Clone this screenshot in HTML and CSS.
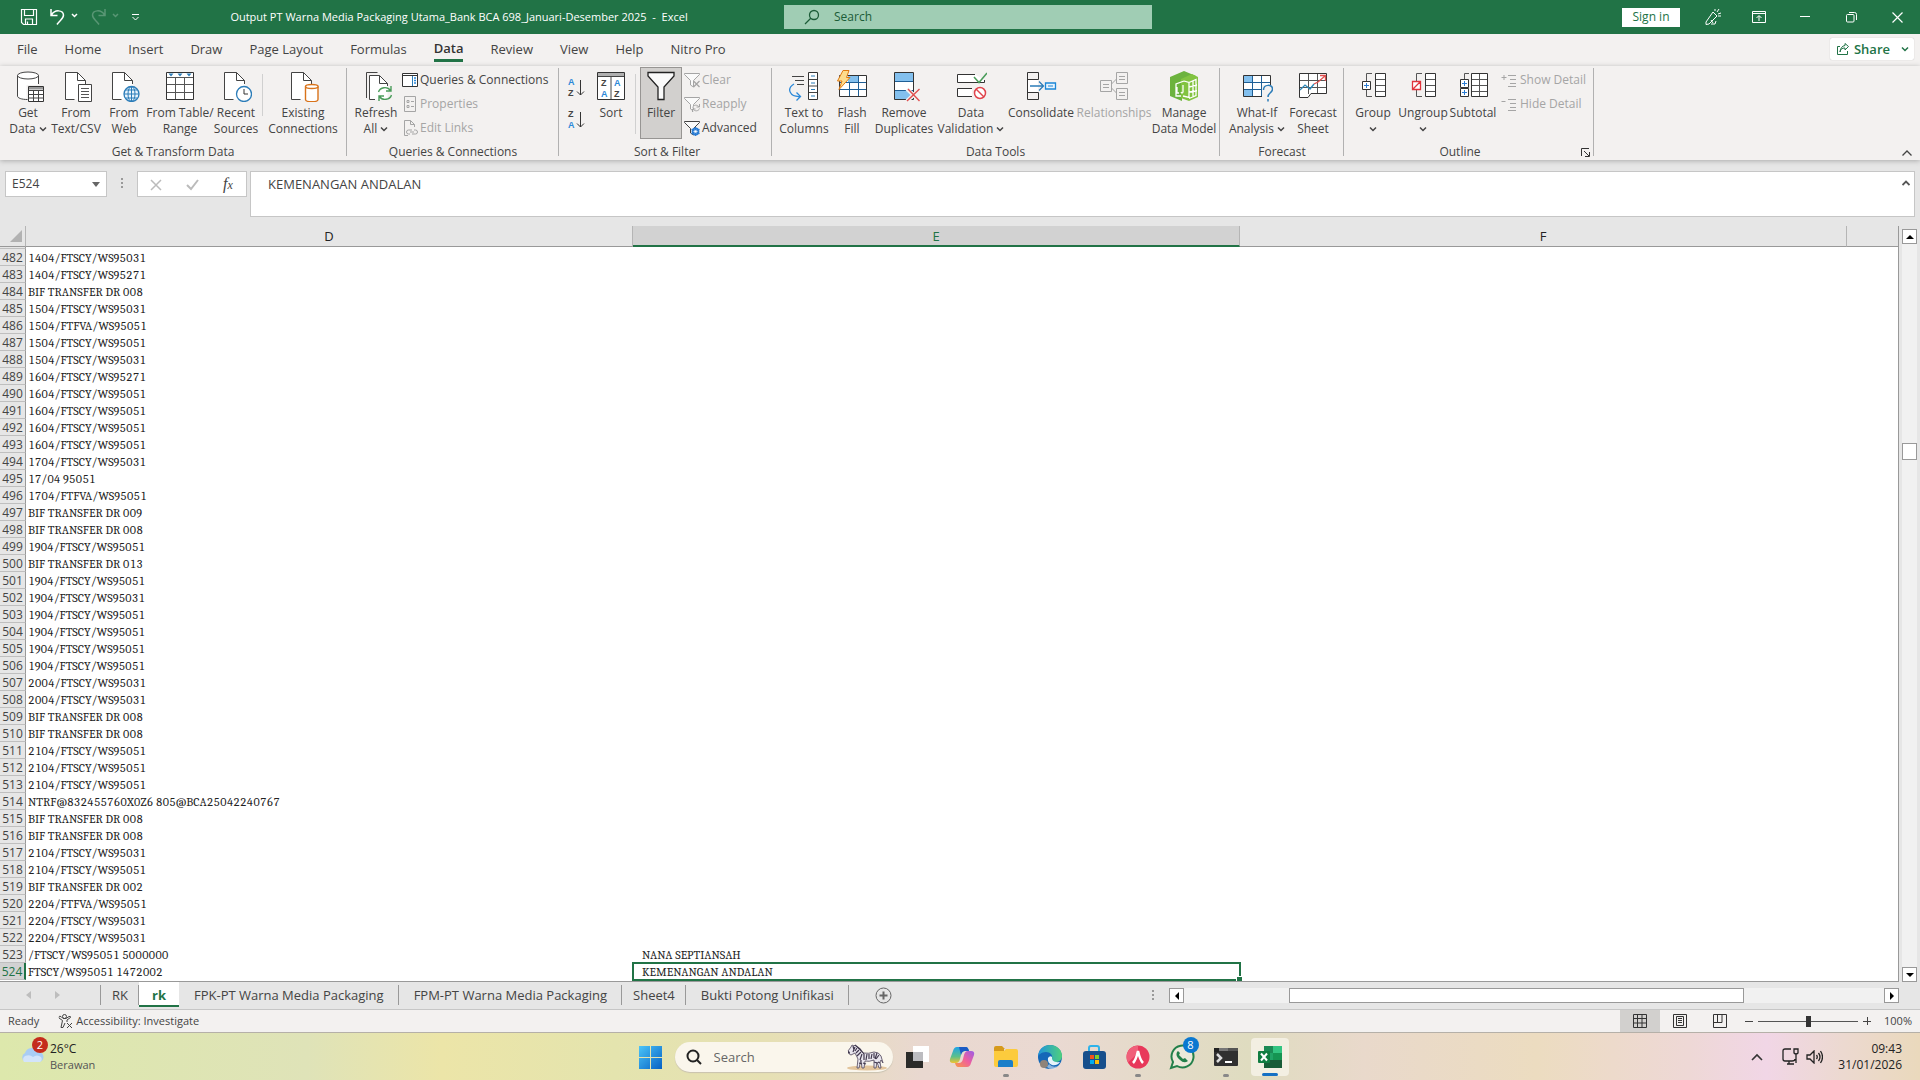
FILE: index.html
```html
<!DOCTYPE html>
<html lang="en">
<head>
    <meta charset="UTF-8">
    <meta name="viewport" content="width=device-width, initial-scale=1.0">
    <title>Output PT Warna Media Packaging Utama_Bank BCA 698_Januari-Desember 2025 - Excel</title>
    <link rel="stylesheet" href="styles.css">
</head>
<body>

    <!-- shared symbols -->
    <svg class="sprite" aria-hidden="true">
        <symbol id="chevron" viewBox="0 0 8 6"><path d="M1 1.500l3 3 3-3" fill="none" stroke="currentColor" stroke-width="1.500"/></symbol>
        <symbol id="page" viewBox="0 0 32 32"><path d="M4.500 2.500h12l8 8v19h-20z" fill="#fff"/><path d="M24.500 14v-3.500l-8-8h-12v27h9M16.500 2.500v8h8" fill="none" stroke="#444"/></symbol>
        <symbol id="funnel" viewBox="0 0 16 16"><path d="M.5 1.500h15v1l-6 6v6.500l-3-2v-4.500l-6-6z" fill="#fafafa" stroke="currentColor"/></symbol>
    </svg>

    <header class="titlebar">
        <div class="quick-access">
            <button aria-label="Save"><svg width="18" height="18" viewBox="0 0 18 18" fill="none" stroke="#fff" stroke-width="1.200"><path d="M1.500 1.500h15v15h-13l-2-2zM4.500 1.500v6h9v-6M5.500 16v-5h7v5M7.500 13.500v3"/></svg></button>
            <button aria-label="Undo"><svg width="30" height="18" viewBox="0 0 30 18" fill="none" stroke="#fff" stroke-width="1.500"><path d="M2 1v6.500h6.500M2.500 7C6 1 14 2 14.500 7c0 4-4 5.500-6.500 9.500"/><path d="M23 6l2.500 2.500L28 6"/></svg></button>
            <button class="faded" aria-label="Redo"><svg width="30" height="18" viewBox="0 0 30 18" fill="none" stroke="#fff" stroke-width="1.500"><path d="M15 1v6.500H8.500M14.500 7C11 1 3 2 2.500 7c0 4 4 5.500 6.500 9.500"/><path d="M23 6l2.500 2.500L28 6"/></svg></button>
            <button aria-label="Customize"><svg width="9" height="9" viewBox="0 0 9 9" fill="none" stroke="#fff"><path d="M1 1.500h7M1.500 4l3 3 3-3"/></svg></button>
        </div>
        <h1>Output PT Warna Media Packaging Utama_Bank BCA 698_Januari-Desember 2025 &nbsp;- &nbsp;Excel</h1>
        <label class="title-search">
            <svg width="16" height="16" viewBox="0 0 16 16" fill="none" stroke="#1c5c38" stroke-width="1.300"><circle cx="10" cy="6" r="4.500"/><path d="M7 9l-6 6"/></svg>
            <input type="text" placeholder="Search" aria-label="Search">
        </label>
        <div class="window-tools">
            <button class="sign-in">Sign in</button>
            <button class="win" aria-label="Coming soon"><svg width="18" height="18" viewBox="0 0 18 18" fill="none" stroke="#fff"><path d="M2 14l7-10 4 4-8 8-3 .5zM9 15l-2-3M7 16h4l1-3M11 3l0-2M13 4l2-3M14 6l3-1M14 8h3"/></svg></button>
            <button class="win" aria-label="Ribbon display"><svg width="14" height="12" viewBox="0 0 14 12" fill="none" stroke="#fff"><path d="M.5.500h13v11H.5zM.5 2.500h13M7 10V5M4.500 7L7 4.500 9.500 7"/></svg></button>
            <button class="win" aria-label="Minimize"><svg width="10" height="10" viewBox="0 0 10 10" fill="none" stroke="#fff"><path d="M0 4.500h10"/></svg></button>
            <button class="win" aria-label="Restore"><svg width="11" height="11" viewBox="0 0 11 11" fill="none" stroke="#fff"><rect x=".5" y="2.500" width="7.500" height="7.500" rx="1"/><path d="M3 .5h5.500q2 0 2 2V8"/></svg></button>
            <button class="win" aria-label="Close"><svg width="11" height="11" viewBox="0 0 11 11" fill="none" stroke="#fff" stroke-width="1.200"><path d="M.5.500l10 10M10.500.500l-10 10"/></svg></button>
        </div>
    </header>

    <nav class="tabs">
        <button>File</button>
        <button>Home</button>
        <button>Insert</button>
        <button>Draw</button>
        <button>Page Layout</button>
        <button>Formulas</button>
        <button class="active">Data</button>
        <button>Review</button>
        <button>View</button>
        <button>Help</button>
        <button>Nitro Pro</button>
        <button class="share">
            <svg width="12" height="12" viewBox="0 0 12 12" fill="none" stroke="#217346"><path d="M3 3.500H.5v8h10V8M3 9c.5-3 2-4 5-4v2l3.500-3.500L8 .5v2C5 3 3.500 5 3 9z"/></svg>
            Share
            <svg class="chev" width="8" height="6"><use href="#chevron"/></svg>
        </button>
    </nav>

    <section class="ribbon">
        <div class="group g-get">
            <div class="tools">
                <button class="tool w48"><svg class="icon" viewBox="-3 0 32 32"><path d="M2.500 5v21c0 2 4 3.500 9 3.500V15h12V5" fill="#fff"/><ellipse cx="13" cy="5.500" rx="10.500" ry="3.500" fill="#fff" stroke="#444"/><path d="M2.500 5.500V26c0 2 4 3.500 10 3.500M23.500 5.500V14" fill="none" stroke="#444"/><path d="M13.500 16.500h15v15h-15z" fill="#fff" stroke="#333"/><path d="M14 17h14v2.500H14z" fill="#999"/><path d="M13.500 20.500h15M13.500 24.500h15M13.500 28h15M18.500 20v11M23.500 20v11" fill="none" stroke="#444"/></svg><span>Get<br>Data <svg class="chev" width="8" height="6"><use href="#chevron"/></svg></span></button>
                <button class="tool w48"><svg class="icon" viewBox="-1 0 32 32"><use href="#page" width="32" height="32"/><path d="M17.500 14.500h13v17h-13z" fill="#fff" stroke="#444"/><path d="M20 18.500h8M20 21.500h8M20 24.500h8M20 27.500h8" stroke="#555"/></svg><span>From<br>Text/CSV</span></button>
                <button class="tool w48"><svg class="icon" viewBox="0 0 32 32"><use href="#page"/><circle cx="23.500" cy="24" r="7.500" fill="#e8f4fd" stroke="#2b7cb8" stroke-width="1.300"/><path d="M16 24h15M23.500 16.500v15M17.500 20h12M17.500 28h12" stroke="#2b7cb8"/><ellipse cx="23.500" cy="24" rx="3.500" ry="7.500" fill="none" stroke="#2b7cb8"/></svg><span>From<br>Web</span></button>
                <button class="tool w64"><svg class="icon" viewBox="0 0 32 32"><path d="M2.500 2.500h27v27h-27z" fill="#fff" stroke="#333"/><path d="M3 7.500h26M3 14.500h26M3 22.500h26M11.500 7v22M20.500 7v22" stroke="#555"/><path d="M4.500 3.500h5L7 6.500zM13.500 3.500h5L16 6.500zM22.500 3.500h5L25 6.500z" fill="#2b7cb8"/></svg><span>From Table/<br>Range</span></button>
                <button class="tool w48"><svg class="icon" viewBox="0 0 32 32"><use href="#page"/><circle cx="24" cy="24" r="7.500" fill="#fff" stroke="#2b7cb8" stroke-width="1.300"/><path d="M24 19v5h4" fill="none" stroke="#333"/></svg><span>Recent<br>Sources</span></button>
                <i class="sep"></i>
                <button class="tool w72"><svg class="icon" viewBox="0 0 32 32"><use href="#page"/><path d="M18.500 16.500v13c0 3 12.500 3 12.500 0v-13" fill="#fff" stroke="#d9731a" stroke-width="1.400"/><ellipse cx="24.800" cy="16.500" rx="6.300" ry="2" fill="#fff" stroke="#d9731a" stroke-width="1.400"/></svg><span>Existing<br>Connections</span></button>
            </div>
            <h2>Get &amp; Transform Data</h2>
        </div>

        <div class="group g-queries">
            <div class="tools">
                <button class="tool w48"><svg class="icon" viewBox="0 0 32 32"><path d="M6.500 28V2.500h11" fill="none" stroke="#444"/><path d="M9.500 5.500h10l8 8v16h-18z" fill="#fff"/><path d="M15 29.500H9.500v-24h10l8 8V16M19.500 5.500v8h8" fill="none" stroke="#444"/><path d="M18.500 22c1.500-5 9-6 12-1.500M31 16v5h-5M31.500 25c-1.500 5-9 6-12 1.500M19 31v-5h5" fill="none" stroke="#4a9c5a" stroke-width="1.400"/></svg><span>Refresh<br>All <svg class="chev" width="8" height="6"><use href="#chevron"/></svg></span></button>
                <div class="stack">
                    <button><svg width="16" height="14" viewBox="0 0 16 14"><path d="M.5.500h15v13H.5z" fill="#fff" stroke="#333"/><path d="M1 2.500h14" stroke="#333"/><path d="M10.500 3v10" stroke="#2b7cb8"/><path d="M12 5h2M12 7.500h2M12 10h2" stroke="#2b88d8" stroke-width="1.500"/></svg>Queries &amp; Connections</button>
                    <button disabled><svg width="16" height="16" viewBox="0 0 16 16" fill="none" stroke="#a5a5a5"><path d="M2.500.500h11v15h-11zM5 4.500h2v2H5zM5 9.500h2v2H5zM9 5.500h3M9 10.500h3"/></svg>Properties</button>
                    <button disabled><svg width="16" height="16" viewBox="0 0 16 16" fill="none" stroke="#a5a5a5"><path d="M6 15.500H2.500V.5h6l4 4V7M8.500.5v4h4M8 14H6.500q-2 0-2-2t2-2H10M12 10h1.500q2 0 2 2t-2 2H10M8 12h4"/></svg>Edit Links</button>
                </div>
            </div>
            <h2>Queries &amp; Connections</h2>
        </div>

        <div class="group g-sort">
            <div class="tools">
                <div class="az">
                    <button aria-label="Sort A to Z"><svg width="18" height="22" viewBox="0 0 18 22"><text x="1" y="9" class="blue">A</text><text x="1" y="20">Z</text><path d="M13.500 4v15M10 15.500l3.500 3.500 3.500-3.500" fill="none" stroke="#333"/></svg></button>
                    <button aria-label="Sort Z to A"><svg width="18" height="22" viewBox="0 0 18 22"><text x="1" y="9">Z</text><text x="1" y="20" class="blue">A</text><path d="M13.500 4v15M10 15.500l3.500 3.500 3.500-3.500" fill="none" stroke="#333"/></svg></button>
                </div>
                <button class="tool w48"><svg class="icon az-box" viewBox="0 0 32 32"><path d="M2.500 2.500h27v27h-27z" fill="#fff" stroke="#333"/><path d="M3 3h26v3H3z" fill="#b0b0b0"/><path d="M3 6.500h26M16 6v23" stroke="#444"/><text x="6" y="16">Z</text><text x="6" y="27" class="blue">A</text><text x="19" y="16" class="blue">A</text><text x="19" y="27">Z</text></svg><span>Sort</span></button>
                <i class="sep tall"></i>
                <button class="tool w42 pressed"><svg class="icon" viewBox="0 0 32 32"><path d="M3 2.500h26v3.500L19 17v12.500h-6V17L3 6z" fill="#fafafa" stroke="#222" stroke-width="1.300"/></svg><span>Filter</span></button>
                <div class="stack">
                    <button disabled><svg width="16" height="16" viewBox="0 0 16 16"><use href="#funnel"/><path d="M9.500 9l6 6M15.500 9l-6 6" stroke="#a5a5a5" stroke-width="1.300"/></svg>Clear</button>
                    <button disabled><svg width="16" height="16" viewBox="0 0 16 16"><use href="#funnel"/><path d="M8.500 11.500c1-3 5-3 6.500-.5M15.500 8v3h-3M15.500 12.500c-1 3-5 3-6.500.5M8.500 16v-3h3" fill="#f3f1f0" stroke="#a5a5a5"/></svg>Reapply</button>
                    <button><svg width="16" height="16" viewBox="0 0 16 16"><use href="#funnel"/><circle cx="11.500" cy="11.500" r="3" fill="#fff" stroke="#2b7cd3" stroke-width="1.800"/><path d="M11.500 7v9M7.500 9.200l8 4.600M7.500 13.800l8-4.600" stroke="#2b7cd3" stroke-width="1.300"/><circle cx="11.500" cy="11.500" r="1.300" fill="#fff"/></svg>Advanced</button>
                </div>
            </div>
            <h2>Sort &amp; Filter</h2>
        </div>

        <div class="group g-data">
            <div class="tools">
                <button class="tool w56"><svg class="icon" viewBox="0 0 32 32"><path d="M4 6.500h12M7 10.500h9M9 14.500h7" stroke="#444"/><path d="M20.500 2.500h9v27h-9z" fill="#fff" stroke="#333"/><path d="M21 9.500h8M21 16h8M21 22.500h8" stroke="#444"/><path d="M23 6h4M23 13h4M23 19.500h4M23 26h4" stroke="#2b7cb8"/><path d="M6 14c-8 5-4 13 6 12.500M8.500 22.500l4 4-4 4" fill="none" stroke="#2b88d8" stroke-width="1.300"/></svg><span>Text to<br>Columns</span></button>
                <button class="tool w40"><svg class="icon" viewBox="0 0 32 32"><path d="M3.500 5.500h27v21h-27z" fill="#fff" stroke="#333"/><path d="M12 6h10v6H12z" fill="#83c0ee"/><path d="M4 12.500h26M4 19.500h26M13.500 12v14M22.500 6v20" stroke="#1f5f95"/><path d="M7 .5h6l-2.500 7H14L3 19.500l3-8.500H1.500z" fill="#fddc8d" stroke="#e07a10"/></svg><span>Flash<br>Fill</span></button>
                <button class="tool w64"><svg class="icon" viewBox="0 0 32 32"><path d="M6.500 2.500h19v27h-19z" fill="#fff" stroke="#333"/><path d="M7 3h18v8H7zM7 20h18v9H7z" fill="#83c0ee"/><path d="M7 11.500h18M7 20.500h18" stroke="#1f5f95"/><path d="M19 19l13 12M32 19L19 31" stroke="#f3f1f0" stroke-width="4"/><path d="M20 19l11.500 12M31.500 19L19 31" stroke="#e04f4f" stroke-width="1.400"/></svg><span>Remove<br>Duplicates</span></button>
                <button class="tool w70"><svg class="icon" viewBox="0 0 32 32"><path d="M20 4.500H2.500v8h27V10M17 18.500H2.500v8H17" fill="#fff" stroke="#333"/><path d="M19 7l5 5.500L32 3" fill="none" stroke="#4a9c5a" stroke-width="1.500"/><circle cx="25" cy="23" r="5.500" fill="#fff" stroke="#e0444c" stroke-width="1.500"/><path d="M21 19l8 8" stroke="#e0444c" stroke-width="1.500"/></svg><span>Data<br>Validation <svg class="chev" width="8" height="6"><use href="#chevron"/></svg></span></button>
                <button class="tool w70"><svg class="icon" viewBox="0 0 32 32"><path d="M13.500 6V2.500h-11v7h11V6M2.500 9.500v13M13.500 26v-3.500h-11v7h11V26" fill="none" stroke="#333"/><path d="M3 10h10v12H3z" fill="#fff"/><path d="M2.500 9v14" stroke="#333"/><path d="M5 16h13M14 11.500l4.500 4.500-4.500 4.500" fill="none" stroke="#2b7cb8" stroke-width="1.300"/><path d="M20.500 13h10v6h-10z" fill="#e8f4fd" stroke="#1b86d6" stroke-width="1.300"/><path d="M23 16h5" stroke="#1b86d6"/></svg><span>Consolidate</span></button>
                <button class="tool w76" disabled><svg class="icon" viewBox="0 0 32 32" fill="none" stroke="#a5a5a5"><path d="M2.500 10.500h11v11h-11zM18.500 2.500h11v11h-11zM18.500 18.500h11v11h-11zM5 14.500h6M5 17.500h6M21 6.500h6M21 9.500h6M21 22.500h6M21 25.500h6M13.500 14l5-5M13.500 18l5 5"/></svg><span>Relationships</span></button>
                <button class="tool w64"><svg class="icon" viewBox="0 0 32 32"><path d="M2 7l14-6 12 5-14 5v20L2 26z" fill="#6cb33e"/><path d="M13 9l11-5 6 3v20l-9 4-8-3z" fill="#82c341"/><path d="M16 11l5 1.500v15L15 26M16 11l-8 3v12h5M21 12.500l7-3v16l-7 3M21 17l8-2M21 22l8-1M25 11v16M9 17v6h2M15 15v7q-1 2-2 0" fill="none" stroke="#fff" stroke-width="1.300"/></svg><span>Manage<br>Data Model</span></button>
            </div>
            <h2>Data Tools</h2>
        </div>

        <div class="group g-forecast">
            <div class="tools">
                <button class="tool w64"><svg class="icon" viewBox="0 0 32 32"><path d="M2.500 5.500h27v21h-27z" fill="#fff" stroke="#333"/><path d="M3 6h8v6H3zM3 19h8v7H3z" fill="#83c0ee"/><path d="M3 12.500h26M3 19.500h26M11.500 6v20M20.500 6v20" stroke="#1f5f95"/><path d="M21 15h11v17H21z" fill="#f3f1f0"/><path d="M22.500 20c0-6 9-6 9-1 0 4-4.500 3.500-4.500 8M27 29v2.500" fill="none" stroke="#2b7cb8" stroke-width="1.500"/></svg><span>What-If<br>Analysis <svg class="chev" width="8" height="6"><use href="#chevron"/></svg></span></button>
                <button class="tool w48"><svg class="icon" viewBox="0 0 32 32"><path d="M2.500 3.500h27v20H14l-3 4H2.500z" fill="#fff" stroke="#333"/><path d="M3 10.500h26M3 17.500h26M11.500 4v20M20.500 4v19" stroke="#555"/><path d="M3 20l5-5 5 4 4-5" fill="none" stroke="#2b88b8" stroke-width="1.300"/><path d="M17 14l4-2 7-6M23 5.500h5.500V11" fill="none" stroke="#e04f4f" stroke-width="1.300"/></svg><span>Forecast<br>Sheet</span></button>
            </div>
            <h2>Forecast</h2>
        </div>

        <div class="group g-outline">
            <div class="tools">
                <button class="tool w48"><svg class="icon" viewBox="0 0 32 32"><path d="M18.500 3.500h10v23h-10z" fill="#fff" stroke="#333"/><path d="M19 9.500h9M19 15.500h9M19 21.500h9M15 3.500H9.500V11M9.500 20v6.500H15" fill="none" stroke="#555"/><path d="M5.500 11.500h8v8h-8z" fill="#fff" stroke="#333"/><path d="M7 15.500h5M9.500 13v5" stroke="#2b7cd3"/></svg><span>Group<br><svg class="chev" width="8" height="6"><use href="#chevron"/></svg></span></button>
                <button class="tool w48"><svg class="icon" viewBox="0 0 32 32"><path d="M18.500 3.500h10v23h-10z" fill="#fff" stroke="#333"/><path d="M19 9.500h9M19 15.500h9M19 21.500h9M15 3.500H9.500V11M9.500 20v6.500H15" fill="none" stroke="#555"/><path d="M5.500 11.500h8v8h-8zM6 19l7-7" fill="#fff" stroke="#e0343c" stroke-width="1.300"/></svg><span>Ungroup<br><svg class="chev" width="8" height="6"><use href="#chevron"/></svg></span></button>
                <button class="tool w48"><svg class="icon" viewBox="0 0 32 32"><path d="M14.500 3.500h16v23h-16z" fill="#fff" stroke="#333"/><path d="M15 9.500h15M15 15.500h15M15 21.500h15M22.500 4v22M12 3.500H7.500V9" fill="none" stroke="#555"/><path d="M3.500 9.500h8v8h-8zM3.500 18.500h8v8h-8z" fill="#fff" stroke="#333"/><path d="M5 13.500h5M7.500 11v5M5 22.500h5M7.500 20v5" stroke="#2b7cd3"/></svg><span>Subtotal</span></button>
                <div class="stack detail">
                    <button disabled><svg width="16" height="14" viewBox="0 0 16 14" stroke="#a5a5a5"><path d="M.5 4.500h5M3 2v5M7 2.500h8M9 6.500h6M9 10.500h6M7 13.500h8"/></svg>Show Detail</button>
                    <button disabled><svg width="16" height="14" viewBox="0 0 16 14" stroke="#a5a5a5"><path d="M.5 4.500h4M7 2.500h8M9 6.500h6M9 10.500h6M7 13.500h8"/></svg>Hide Detail</button>
                </div>
            </div>
            <h2>Outline</h2>
            <button class="launcher" aria-label="Outline settings"><svg width="9" height="9" viewBox="0 0 9 9" fill="none" stroke="#333"><path d="M.5 8V.5H8M3 3l5 5M8.500 4v4.500H4"/></svg></button>
        </div>
        <button class="collapse" aria-label="Collapse ribbon"><svg width="10" height="6" viewBox="0 0 10 6" fill="none" stroke="#444" stroke-width="1.300"><path d="M.5 5.500L5 1l4.500 4.500"/></svg></button>
    </section>

    <section class="formula-bar">
        <label class="name-box">
            <input type="text" value="E524" aria-label="Name box">
            <svg width="8" height="5" viewBox="0 0 8 5"><path d="M0 0h8L4 5z" fill="#666"/></svg>
        </label>
        <span class="grip"></span>
        <div class="fx">
            <button aria-label="Cancel"><svg width="12" height="12" viewBox="0 0 12 12" fill="none" stroke="#bbb" stroke-width="1.500"><path d="M1 1l10 10M11 1L1 11"/></svg></button>
            <button aria-label="Enter"><svg width="13" height="12" viewBox="0 0 13 12" fill="none" stroke="#bbb" stroke-width="2"><path d="M1 6l4 4 7-9"/></svg></button>
            <button aria-label="Insert function"><em>f</em><sub>x</sub></button>
        </div>
        <label class="formula">
            <input type="text" value="KEMENANGAN ANDALAN" aria-label="Formula">
            <svg width="8" height="6" viewBox="0 0 8 6" fill="none" stroke="#555" stroke-width="1.800"><path d="M.5 5L4 1.500 7.500 5"/></svg>
        </label>
    </section>

    <main class="workspace">
        <div class="sheet">
            <table class="columns">
                <colgroup><col class="c-num"><col class="c-data"><col class="c-data"><col class="c-data"><col></colgroup>
                <tr><th class="corner"><svg width="12" height="12" viewBox="0 0 12 12"><path d="M12 0v12H0z" fill="#b2b2b2"/></svg></th><th>D</th><th class="selected">E</th><th>F</th><th></th></tr>
            </table>
            <div class="rows">
                <table>
                    <colgroup><col class="c-num"><col class="c-data"><col class="c-data"><col class="c-data"><col></colgroup>
                    <tbody id="cells"></tbody>
                </table>
            </div>
        </div>
        <div class="vscroll">
            <button aria-label="Scroll up"><svg width="8" height="4" viewBox="0 0 8 4"><path d="M4 0l4 4H0z"/></svg></button>
            <span class="before"></span>
            <span class="thumb"></span>
            <span class="after"></span>
            <button aria-label="Scroll down"><svg width="8" height="4" viewBox="0 0 8 4"><path d="M0 0h8L4 4z"/></svg></button>
        </div>
    </main>

    <section class="sheet-bar">
        <div class="sheet-nav">
            <svg width="5" height="8" viewBox="0 0 5 8"><path d="M5 0v8L0 4z" fill="#bdbdbd"/></svg>
            <svg width="5" height="8" viewBox="0 0 5 8"><path d="M0 0v8l5-4z" fill="#bdbdbd"/></svg>
        </div>
        <button class="small">RK</button>
        <button class="small active">rk</button>
        <button class="wide">FPK-PT Warna Media Packaging</button>
        <button class="wide">FPM-PT Warna Media Packaging</button>
        <button class="small">Sheet4</button>
        <button class="wide">Bukti Potong Unifikasi</button>
        <button class="add" aria-label="New sheet"><svg width="17" height="17" viewBox="0 0 17 17" fill="none" stroke="#666"><circle cx="8.500" cy="8.500" r="7.500"/><path d="M4.500 8.500h8M8.500 4.500v8" stroke-width="2"/></svg></button>
        <span class="grip"></span>
        <div class="hscroll">
            <button aria-label="Scroll left"><svg width="4" height="8" viewBox="0 0 4 8"><path d="M4 0v8L0 4z"/></svg></button>
            <span class="before"></span>
            <span class="thumb"></span>
            <span class="after"></span>
            <button aria-label="Scroll right"><svg width="4" height="8" viewBox="0 0 4 8"><path d="M0 0v8l4-4z"/></svg></button>
        </div>
    </section>

    <section class="status">
        <span>Ready</span>
        <button class="access"><svg width="15" height="15" viewBox="0 0 15 15" fill="none" stroke="#444"><circle cx="6.500" cy="2.500" r="2"/><path d="M1 3.500q0-2 2-1l2 2h3l3-2q2-.5 1.500 1L9 6v2M1 4l3.500 2.500L3 13.500h2L7 9M9 9l5 5M14 9l-5 5"/></svg>Accessibility: Investigate</button>
        <div class="views">
            <button class="active" aria-label="Normal"><svg width="14" height="14" viewBox="0 0 14 14" fill="none" stroke="#333"><path d="M.5.500h13v13H.5zM.5 4.500h13M.5 9h13M4.500.500v13M9 .5v13"/></svg></button>
            <button aria-label="Page layout"><svg width="14" height="14" viewBox="0 0 14 14" fill="none" stroke="#333"><path d="M.5.500h13v13H.5zM3.500 2.500h7v9h-7zM5 4.500h4M5 6.500h4M5 8.500h4"/></svg></button>
            <button aria-label="Page break"><svg width="14" height="14" viewBox="0 0 14 14" fill="none" stroke="#333"><path d="M.5.500h13v13H.5zM4.500.500v8M9 .5v8M.5 8.500H9"/></svg></button>
        </div>
        <button class="zoom-step" aria-label="Zoom out"><svg width="8" height="8" viewBox="0 0 8 8" stroke="#444"><path d="M0 4.500h8"/></svg></button>
        <input type="range" min="0" max="100" value="50" aria-label="Zoom">
        <button class="zoom-step" aria-label="Zoom in"><svg width="8" height="8" viewBox="0 0 8 8" stroke="#444"><path d="M0 4.500h8M4.500 0v8"/></svg></button>
        <span class="percent">100%</span>
    </section>

    <footer class="taskbar">
        <button class="weather">
            <span class="cloud">
                <svg width="26" height="18" viewBox="0 0 26 18"><path d="M6 16a5 5 0 0 1 0-9A7 7 0 0 1 19 6a5 5 0 0 1 1 10z" fill="#a9cdf5"/><path d="M5 16a4 4 0 0 1 1-6q5-2 8 1 4-3 8 0 2 3-1 5z" fill="#d3e4fa"/></svg>
                <b class="badge">2</b>
            </span>
            <span>26°C<br><small>Berawan</small></span>
        </button>
        <div class="apps">
            <button class="app" aria-label="Start"><svg width="24" height="24" viewBox="0 0 24 24"><defs><linearGradient id="win" x1="0" y1="0" x2="1" y2="1"><stop offset="0" stop-color="#4cc5f8"/><stop offset="1" stop-color="#0560c4"/></linearGradient></defs><path d="M1 1h11v11H1zM13 1h11v11H13zM1 13h11v11H1zM13 13h11v11H13z" fill="url(#win)"/></svg></button>
            <label class="search">
                <svg width="16" height="16" viewBox="0 0 16 16" fill="none" stroke="#222" stroke-width="2"><circle cx="7" cy="7" r="5.500"/><path d="M11 11l4 4"/></svg>
                <input type="text" placeholder="Search" aria-label="Taskbar search">
                <svg width="42" height="28" viewBox="0 0 42 28"><ellipse cx="21" cy="25" rx="20" ry="2.500" fill="#e3c59c"/><path d="M2 8l3-4 1-2 2 1 1-1 2 2 6 6q6 1 11-1 5 0 7 4l2 7-2-3-1 2 1 6h-2l-2-6-1 6h-2v-8q-5 2-9 1l-1 7h-2l-1-8-2 8h-2l1-9-3-6-4 2q-2 0-2-3z" fill="#e9e6ee" stroke="#4b4358" stroke-width=".8"/><path d="M7 3l1 4M9 4l-2 5M11 5l-2 3M13 7l-3 3M15 9l-4 4M16 11l-2 6M18 11v6M21 11l-1 6M23 11v5M26 11l-1 5M28 10v5M31 10l-2 6M33 12l-3 4M13 20l3 1M17 20l3 1M28 19l3 1M32 19l2 1M9 2l5 4 4 5" stroke="#40384e" stroke-width="1.200" fill="none"/><path d="M2 8l2 1-1 2-1-1z" fill="#40384e"/></svg>
            </label>
            <button class="app" aria-label="Task view"><svg width="26" height="24" viewBox="0 0 26 24"><path d="M8 1h16v16H8z" fill="#fff"/><path d="M1 7h17v16H1z" fill="#2b2b29"/><path d="M8 7h10v9H8z" fill="#bcbcc0"/></svg></button>
            <button class="app" aria-label="Copilot"><svg width="26" height="24" viewBox="0 0 26 24"><defs><linearGradient id="cp1" x1="0" y1="0" x2="0" y2="1"><stop offset="0" stop-color="#1fa3e8"/><stop offset=".6" stop-color="#5cc08a"/><stop offset="1" stop-color="#f0c330"/></linearGradient><linearGradient id="cp2" x1="1" y1="0" x2="0" y2="1"><stop offset="0" stop-color="#9a5ce8"/><stop offset=".5" stop-color="#f05f9c"/><stop offset="1" stop-color="#f79b45"/></linearGradient></defs><path d="M8 2h9q2 0 3 4h-4q-3 0-4 4l-1 4q-1 4-4 4H4q-4 0-3-4L4 6q1-4 4-4z" fill="url(#cp1)"/><path d="M18 22H9q-2 0-3-4h4q3 0 4-4l1-4q1-4 4-4h3q4 0 3 4l-3 8q-1 4-4 4z" fill="url(#cp2)"/><path d="M10 2h7q2 0 3 4h-4q-3 0-4 4z" fill="#1b5bc4"/></svg></button>
            <button class="app open" aria-label="File Explorer"><svg width="26" height="24" viewBox="0 0 26 24"><path d="M1 3q0-2 2-2h6l3 3h-1v5H1z" fill="#d69a1c"/><path d="M1 6h10l2-2h10q2 0 2 2v14q0 2-2 2H3q-2 0-2-2z" fill="#fccb3d"/><path d="M5 22v-5q0-2 2-2h11q2 0 2 2v5z" fill="#1b7fc9"/></svg></button>
            <button class="app" aria-label="Edge"><svg width="26" height="26" viewBox="0 0 26 26"><defs><linearGradient id="edge" x1="0" y1="0" x2="1" y2="0"><stop offset="0" stop-color="#1f93dc"/><stop offset="1" stop-color="#4fd07c"/></linearGradient></defs><circle cx="13" cy="13" r="12" fill="#1467b8"/><path d="M1 12C2 4 8 1 13 1c8 0 12 6 12 11 0 4-3 6-7 6-3 0-4-2-3-4 1-3-2-6-6-6-5 0-7 3-8 4z" fill="url(#edge)"/><path d="M15 13q-1 6 8 5-3 4-8 3-5-2-4-7 2-3 4-1z" fill="#e5f3fa"/><circle cx="7" cy="20" r="4" fill="#8f8379"/><path d="M12 20q4 4 8 2l-2 3q-5 1-8-2z" fill="#fff" opacity=".5"/></svg></button>
            <button class="app" aria-label="Store"><svg width="24" height="24" viewBox="0 0 24 24"><path d="M7 7V3q0-2 2-2h6q2 0 2 2v4" fill="none" stroke="#2fb3ea" stroke-width="2"/><rect x="1" y="6" width="23" height="18" rx="3" fill="#164f8c"/><path d="M8 10h4v4H8z" fill="#f1511b"/><path d="M13 10h4v4h-4z" fill="#80cc28"/><path d="M8 15h4v4H8z" fill="#00adef"/><path d="M13 15h4v4h-4z" fill="#fbbc09"/></svg></button>
            <button class="app open" aria-label="Accurate"><svg width="24" height="24" viewBox="0 0 24 24"><circle cx="12" cy="12" r="11.500" fill="#e8385a"/><path d="M12 .5a11.500 11.500 0 0 0-10 17L12 8z" fill="#f0607a"/><path d="M7 18q3-3 5-12 2 9 5 12" fill="none" stroke="#fff" stroke-width="2.500"/></svg></button>
            <button class="app" aria-label="WhatsApp"><svg width="26" height="26" viewBox="0 0 26 26"><path d="M2 24l2-6a11 11 0 1 1 4 4z" fill="#ece9da" stroke="#23804a" stroke-width="2"/><path d="M8 8q-2 4 3 8 4 4 8 1l-3-3-2 1-4-4 1-2-2-2z" fill="#23804a"/></svg><b class="badge blue">8</b></button>
            <button class="app open" aria-label="Terminal"><svg width="26" height="20" viewBox="0 0 26 20"><rect x="1" y="1" width="24" height="18" rx="1" fill="#303030"/><path d="M1 1h5v4H1z" fill="#222"/><path d="M6 1h9v3H6z" fill="#777"/><path d="M15 1h10v3H15z" fill="#555"/><path d="M4 7l4 4-4 4" fill="none" stroke="#ddd" stroke-width="2.500"/><path d="M12 15h7" stroke="#fff" stroke-width="2"/></svg></button>
            <button class="app current" aria-label="Excel"><svg width="26" height="24" viewBox="0 0 26 24"><path d="M7 1h18v22H7z" fill="#21a366"/><path d="M7 1h9v7H7z" fill="#1b8a55"/><path d="M16 1h9v7h-9z" fill="#33c481"/><path d="M7 15h18v8H7z" fill="#185c37"/><path d="M16 8h9v7h-9z" fill="#159452"/><rect x="1" y="6" width="12" height="12" rx="1" fill="#107c41"/><path d="M4 8.500l6 7M10 8.500l-6 7" stroke="#fff" stroke-width="2"/></svg></button>
        </div>
        <div class="tray">
            <svg width="12" height="8" viewBox="0 0 12 8" fill="none" stroke="#333" stroke-width="1.600"><path d="M1 7l5-5 5 5"/></svg>
            <svg class="net" width="17" height="17" viewBox="0 0 17 17" fill="none" stroke="#222" stroke-width="1.300"><path d="M9 1H3Q1 1 1 3v8q0 2 2 2h7q3 0 3-2M5 16h7M7 13v3M12 1h4v4q-2 2-4 0zM14 6v9"/></svg>
            <svg class="sound" width="17" height="14" viewBox="0 0 17 14" fill="none" stroke="#222" stroke-width="1.300"><path d="M1 5h3l4-4v12L4 9H1zM10.500 5q1.500 2 0 4M12.500 3q3 4 0 8M14.500 1q4 6 0 12"/></svg>
            <time>09:43<br>31/01/2026</time>
        </div>
    </footer>

    <script src="script.js"></script>
</body>
</html>
```
FILE: styles.css
```css
* {
    margin: 0;
    padding: 0;
    box-sizing: border-box;
}

body {
    display: flex;
    flex-direction: column;
    height: 100vh;
    overflow: hidden;
    background-color: #e6e6e6;
    color: #444;
    font-family: 'Open Sans', 'Noto Sans', sans-serif;
    font-size: 12px;
    line-height: 16px;
}

button, input {
    background: none;
    border: none;
    border-radius: 0;
    color: inherit;
    font: inherit;
    outline: none;
}

button {
    white-space: nowrap;
}

svg {
    flex: none;
}

.sprite {
    position: absolute;
    width: 0;
    height: 0;
}

.chev {
    vertical-align: 1px;
}


.titlebar {
    flex: none;
    display: grid;
    grid-template-columns: 1fr 384px 1fr;
    align-items: center;
    height: 34px;
    background-color: #217346;
    color: #fff;
    position: relative;
}

.quick-access {
    display: flex;
    align-items: center;
    gap: 11px;
    padding-left: 20px;
}

.quick-access button {
    display: flex;
}

.quick-access .faded {
    opacity: 0.25;
}

.titlebar h1 {
    position: absolute;
    left: 12%;
    font-size: 11px;
    font-weight: normal;
    white-space: nowrap;
}

.title-search {
    grid-column: 2;
    display: flex;
    align-items: center;
    gap: 14px;
    height: 24px;
    margin-left: 16px;
    padding-left: 20px;
    background-color: #a0cdb4;
}

.title-search input {
    flex: 1;
    color: #1c5c38;
}

.title-search input::placeholder {
    color: #1c5c38;
}

.window-tools {
    display: flex;
    align-items: center;
    justify-content: flex-end;
}

.sign-in {
    width: 58px;
    height: 19px;
    margin-right: 10px;
    background-color: #fff;
    color: #217346;
}

.win {
    display: flex;
    align-items: center;
    justify-content: center;
    width: 46px;
    height: 32px;
}


.tabs {
    flex: none;
    display: flex;
    gap: 27px;
    height: 32px;
    padding: 0 6px 0 17px;
    background-color: #f3f1f0;
    font-size: 13px;
}

.tabs button {
    height: 28px;
    padding-top: 2px;
}

.tabs .active {
    border-bottom: 3px solid #217346;
    color: #333;
    font-weight: 600;
}

.tabs .share {
    display: flex;
    align-items: center;
    gap: 5px;
    height: 22px;
    margin: 4px 0 0 auto;
    padding: 0 5px 0 7px;
    background-color: #fff;
    border-radius: 2px;
    box-shadow: 0 0 1px #aaa;
    color: #217346;
    font-weight: 600;
}

.share .chev {
    margin-left: 6px;
}


.ribbon {
    flex: none;
    display: flex;
    position: relative;
    z-index: 1;
    height: 94px;
    background-color: #f3f1f0;
    box-shadow: 0 1px 5px #aaa;
}

.group {
    display: flex;
    flex-direction: column;
    justify-content: space-between;
    position: relative;
    padding: 1px 5px 0;
}

.group::after {
    content: "";
    position: absolute;
    top: 2px;
    right: 0;
    bottom: 4px;
    width: 1px;
    background-color: #b1b1b1;
}

.g-get {
    width: 347px;
    padding-left: 4px;
}

.g-queries {
    width: 212px;
}

.g-sort {
    width: 213px;
    padding-left: 8px;
}

.g-data {
    width: 448px;
    padding-left: 4px;
}

.g-forecast {
    width: 124px;
}

.g-outline {
    width: 250px;
}

.group h2 {
    font-size: 12px;
    font-weight: normal;
    text-align: center;
}

.g-outline h2 {
    padding-right: 18px;
}

.g-outline .tools {
    gap: 2px;
}

.tools {
    display: flex;
}

.tool {
    flex: none;
    display: flex;
    flex-direction: column;
    align-items: center;
    gap: 3px;
    height: 72px;
    padding-top: 3px;
}

.icon {
    width: 32px;
    height: 32px;
}

.w40 {
    width: 40px;
}

.w42 {
    width: 42px;
}

.w48 {
    width: 48px;
}

.w56 {
    width: 56px;
}

.w64 {
    width: 64px;
}

.w70 {
    width: 70px;
}

.w72 {
    width: 72px;
}

.w76 {
    width: 76px;
}

.pressed {
    background-color: #d2d0ce;
    border: 1px solid #979593;
    padding-top: 2px;
}

button:disabled {
    color: #a5a5a5;
}

.sep {
    width: 1px;
    height: 42px;
    margin: 7px 4px 0 2px;
    background-color: #d0d0d0;
}

.sep.tall {
    height: 60px;
    margin: 7px 4px 0 0;
}

.stack {
    display: flex;
    flex-direction: column;
    padding: 1px 0 0 2px;
}

.stack button {
    display: flex;
    align-items: center;
    gap: 2px;
    height: 24px;
}

.detail button {
    gap: 3px;
}

.az {
    display: flex;
    flex-direction: column;
    gap: 10px;
    width: 20px;
    padding-top: 9px;
}

.az button {
    display: flex;
}

.az text, .az-box text {
    font-family: 'Liberation Sans', sans-serif;
    font-size: 9px;
    font-weight: bold;
    fill: #444;
}

.az .blue, .az-box .blue {
    fill: #2b88d8;
}

.launcher {
    position: absolute;
    right: 4px;
    bottom: 3px;
    display: flex;
}

.collapse {
    display: flex;
    align-items: flex-end;
    margin-left: auto;
    padding: 0 8px 4px;
}


.formula-bar {
    flex: none;
    display: flex;
    align-items: flex-start;
    padding: 11px 5px 9px;
}

.name-box, .fx, .formula {
    display: flex;
    background-color: #fff;
    border: 1px solid #c6c6c6;
}

.name-box {
    align-items: center;
    width: 102px;
    height: 26px;
    padding: 0 6px;
}

.name-box input {
    flex: 1;
    min-width: 0;
}

.grip {
    width: 2px;
    height: 12px;
    margin: 7px 14px;
    background-image: linear-gradient(#999 50%, transparent 50%);
    background-size: 2px 4px;
}

.fx {
    align-items: center;
    width: 110px;
    height: 26px;
}

.fx button {
    flex: 1;
}

.fx svg {
    vertical-align: middle;
}

.fx em {
    font-family: 'Liberation Serif', serif;
    font-size: 16px;
}

.fx sub {
    font-family: 'Liberation Serif', serif;
    font-size: 12px;
    font-style: italic;
    vertical-align: baseline;
}

.formula {
    flex: 1;
    align-items: flex-start;
    height: 46px;
    margin-left: 3px;
    padding: 0 4px 0 17px;
}

.formula input {
    flex: 1;
    height: 24px;
    font-size: 13px;
}

.formula svg {
    margin-top: 8px;
}


.workspace {
    flex: 1;
    min-height: 0;
    display: flex;
}

.sheet {
    flex: 1;
    min-width: 0;
    display: flex;
    flex-direction: column;
    border-right: 1px solid #999;
    border-bottom: 1px solid #999;
}

table {
    width: 100%;
    border-collapse: separate;
    border-spacing: 0;
    table-layout: fixed;
}

.c-num {
    width: 26px;
}

.c-data {
    width: 607px;
}

.columns {
    flex: none;
}

.columns th {
    height: 21px;
    border-right: 1px solid #b5b5b5;
    border-bottom: 1px solid #999;
    color: #222;
    font-size: 13px;
    font-weight: normal;
}

.columns th:last-child {
    border-right: none;
}

.columns .corner {
    padding-right: 3px;
}

.corner svg {
    display: block;
    margin-left: auto;
}

.columns .selected {
    background-color: #d2d2d2;
    border-bottom: 2px solid #217346;
    color: #217346;
}

.rows {
    flex: 1;
    min-height: 0;
    display: flex;
    flex-direction: column;
    justify-content: flex-end;
    overflow: hidden;
    padding-bottom: 1px;
    background-color: #fff;
}

.rows th {
    height: 17px;
    padding-top: 1px;
    background-color: #e6e6e6;
    border-right: 1px solid #999;
    border-bottom: 1px solid #bfbfbf;
    font-size: 12px;
    font-weight: normal;
    line-height: 15px;
    white-space: nowrap;
}

.rows td {
    height: 17px;
    padding: 1px 0 0 2px;
    color: #222;
    font-family: Cambria, Caladea, 'DejaVu Serif Condensed', 'DejaVu Serif', serif;
    font-size: 12px;
    font-variant-numeric: tabular-nums;
    line-height: 16px;
    white-space: nowrap;
}

.rows td:nth-child(3) {
    padding-left: 9px;
}

.rows .selected th {
    background-color: #d2d2d2;
    border-right: 2px solid #217346;
    color: #217346;
}

.rows .selected td:nth-child(3) {
    position: relative;
    outline: 2px solid #217346;
    outline-offset: -1px;
}

.selected td:nth-child(3)::after {
    content: "";
    position: absolute;
    right: -2px;
    bottom: -2px;
    width: 5px;
    height: 5px;
    background-color: #217346;
    border-top: 1px solid #fff;
    border-left: 1px solid #fff;
}

.vscroll {
    display: flex;
    flex-direction: column;
    width: 21px;
    padding: 3px 3px 0;
}

.vscroll button, .hscroll button {
    flex: none;
    display: flex;
    align-items: center;
    justify-content: center;
    width: 15px;
    height: 15px;
    background-color: #fff;
    border: 1px solid #999;
}

.before, .after {
    background-color: #f1f1f1;
}

.thumb {
    background-color: #fff;
    border: 1px solid #999;
}

.vscroll .thumb {
    height: 17px;
}

.vscroll .before {
    flex: 199;
}

.vscroll .after {
    flex: 507;
}


.sheet-bar {
    flex: none;
    display: flex;
    height: 28px;
    padding-right: 21px;
    border-bottom: 1px solid #c6c6c6;
    font-size: 13px;
}

.sheet-nav {
    display: flex;
    align-items: center;
    gap: 24px;
    width: 101px;
    height: 26px;
    padding-left: 26px;
    background: linear-gradient(#999, #999) right center / 1px 20px no-repeat;
}

.sheet-bar > button {
    height: 26px;
    background: linear-gradient(#999, #999) right center / 1px 20px no-repeat;
}

.sheet-bar .small {
    padding: 0 11px;
}

.sheet-bar .wide {
    padding: 0 15px;
}

.sheet-bar .active {
    height: 25px;
    padding: 2px 13px 0;
    background: #fff;
    border-bottom: 2px solid #217346;
    color: #217346;
    font-weight: bold;
}

.sheet-bar .add {
    display: flex;
    align-items: center;
    margin-left: 26px;
    background: none;
}

.sheet-bar .grip {
    margin: 8px 15px 0 auto;
}

.hscroll {
    display: flex;
    width: 730px;
    height: 15px;
    margin-top: 6px;
}

.hscroll .before {
    flex: 105;
}

.hscroll .thumb {
    flex: 455;
}

.hscroll .after {
    flex: 140;
}


.status {
    flex: none;
    display: flex;
    align-items: center;
    height: 22px;
    padding: 0 8px;
    background-color: #f3f1f0;
    font-size: 11px;
}

.access {
    display: flex;
    align-items: center;
    gap: 3px;
    margin-left: 19px;
}

.views {
    display: flex;
    align-self: stretch;
    margin-left: auto;
}

.views button {
    display: flex;
    align-items: center;
    justify-content: center;
    width: 40px;
}

.views .active {
    background-color: #d2d0ce;
}

.zoom-step {
    display: flex;
    padding: 0 5px;
}

.status input {
    appearance: none;
    width: 100px;
    height: 12px;
    background: linear-gradient(#555, #555) center / 100% 1px no-repeat;
}

.status input::-webkit-slider-thumb {
    appearance: none;
    width: 5px;
    height: 11px;
    background-color: #333;
}

.percent {
    width: 36px;
    text-align: right;
}


.taskbar {
    flex: none;
    display: grid;
    grid-template-columns: 1fr auto 1fr;
    align-items: center;
    height: 48px;
    border-top: 1px solid #b5b0a8;
    background-image: linear-gradient(90deg, #dde8ac 0%, #dfe3b8 16%, #ece5a8 23%, #e4e4ae 32%, #e6e0b4 40%, #e9d8d0 48%, #ead9d2 55%, #dfdcc0 65%, #e9d9cb 71%, #ecdcc0 80%, #eed8d6 88%, #f1d6e6 92%, #ecd9d0 96%, #ead9bc 100%);
    color: #222;
}

.weather {
    display: flex;
    align-items: center;
    justify-self: start;
    gap: 5px;
    padding-left: 19px;
    text-align: left;
}

.weather small {
    color: #555;
    font-size: 11px;
}

.cloud {
    position: relative;
}

.badge {
    position: absolute;
    top: -9px;
    right: -3px;
    width: 16px;
    height: 16px;
    background-color: #c42b1c;
    border-radius: 50%;
    color: #fff;
    font-size: 11px;
    font-weight: normal;
    text-align: center;
}

.badge.blue {
    top: 3px;
    right: 5px;
    background-color: #0b78d0;
}

.apps {
    display: flex;
    align-items: center;
    padding-right: 4px;
}

.app {
    display: flex;
    align-items: center;
    justify-content: center;
    position: relative;
    width: 44px;
    height: 46px;
}

.search {
    display: flex;
    align-items: center;
    gap: 12px;
    width: 218px;
    height: 30px;
    margin: 0 3px;
    padding: 0 5px 0 11px;
    background-color: #faf6ec;
    border-radius: 15px;
    box-shadow: 0 1px 1px #c9c2b0;
}

.search input {
    flex: 1;
    min-width: 0;
    font-size: 13px;
}

.search input::placeholder {
    color: #666;
}

.open::after, .current::after {
    content: "";
    position: absolute;
    bottom: 3px;
    width: 6px;
    height: 3px;
    background-color: #888;
    border-radius: 2px;
}

.app.current {
    width: 38px;
    height: 38px;
    margin-left: 3px;
    background-color: #f3efe2;
    border-radius: 4px;
}

.current::after {
    bottom: 0;
    width: 16px;
    background-color: #1670c4;
}

.tray {
    display: flex;
    align-items: center;
    justify-content: flex-end;
    padding-right: 18px;
}

.tray .net {
    margin: 0 7px 0 19px;
}

.tray .sound {
    margin-right: 15px;
}

.tray time {
    text-align: right;
}
```
FILE: script.js
```js
const firstRow = 481;
const activeRow = 524;

const colD = [
    '1404/FTSCY/WS95031', '1404/FTSCY/WS95031', '1404/FTSCY/WS95271', 'BIF TRANSFER DR 008',
    '1504/FTSCY/WS95031', '1504/FTFVA/WS95051', '1504/FTSCY/WS95051', '1504/FTSCY/WS95031',
    '1604/FTSCY/WS95271', '1604/FTSCY/WS95051', '1604/FTSCY/WS95051', '1604/FTSCY/WS95051',
    '1604/FTSCY/WS95051', '1704/FTSCY/WS95031', '17/04 95051', '1704/FTFVA/WS95051',
    'BIF TRANSFER DR 009', 'BIF TRANSFER DR 008', '1904/FTSCY/WS95051', 'BIF TRANSFER DR 013',
    '1904/FTSCY/WS95051', '1904/FTSCY/WS95031', '1904/FTSCY/WS95051', '1904/FTSCY/WS95051',
    '1904/FTSCY/WS95051', '1904/FTSCY/WS95051', '2004/FTSCY/WS95031', '2004/FTSCY/WS95031',
    'BIF TRANSFER DR 008', 'BIF TRANSFER DR 008', '2104/FTSCY/WS95051', '2104/FTSCY/WS95051',
    '2104/FTSCY/WS95051', 'NTRF@832455760X0Z6 805@BCA25042240767', 'BIF TRANSFER DR 008',
    'BIF TRANSFER DR 008', '2104/FTSCY/WS95031', '2104/FTSCY/WS95051', 'BIF TRANSFER DR 002',
    '2204/FTFVA/WS95051', '2204/FTSCY/WS95031', '2204/FTSCY/WS95031',
    '/FTSCY/WS95051 5000000', 'FTSCY/WS95051 1472002'
];

const colE = {
    523: 'NANA SEPTIANSAH',
    524: 'KEMENANGAN ANDALAN'
};

document.getElementById('cells').innerHTML = colD.map((text, i) => {
    const row = firstRow + i;
    return `<tr class="${row === activeRow ? 'selected' : ''}">
        <th>${row}</th><td>${text}</td><td>${colE[row] || ''}</td><td></td><td></td>
    </tr>`;
}).join('');
```
